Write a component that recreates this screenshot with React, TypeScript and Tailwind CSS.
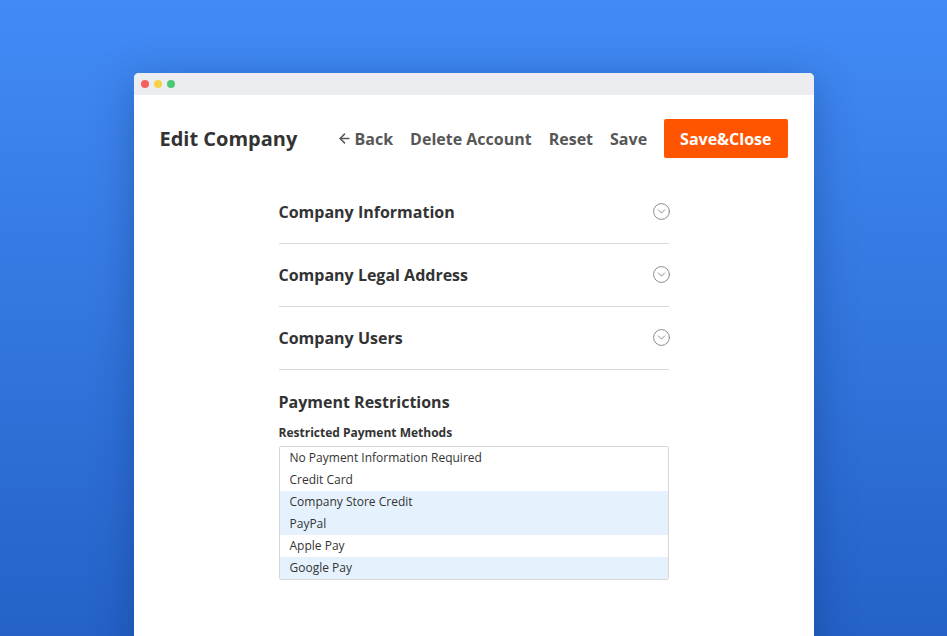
import { ArrowLeft, CircleChevronDown } from "lucide-react";

const sections = ["Company Information", "Company Legal Address", "Company Users"];

const methods = [
  { label: "No Payment Information Required", selected: false },
  { label: "Credit Card", selected: false },
  { label: "Company Store Credit", selected: true },
  { label: "PayPal", selected: true },
  { label: "Apple Pay", selected: false },
  { label: "Google Pay", selected: true },
];

export default function App() {
  return (
    <div
      className="h-[636px] w-full overflow-hidden bg-gradient-to-b from-[#428bf6] to-[#2462c7] pt-[73px] text-[#333]"
      style={{ fontFamily: '"Open Sans", sans-serif' }}
    >
      <div className="mx-auto h-[600px] w-[680px] overflow-hidden rounded-t-[5px] bg-white shadow-[0_8px_40px_rgba(10,40,100,0.35)]">
        {/* title bar */}
        <div className="flex h-[22px] items-center gap-[5px] bg-[#ebedf0] pl-[7px]">
          <span className="h-2 w-2 rounded-full bg-[#f56060]" />
          <span className="h-2 w-2 rounded-full bg-[#f9d04a]" />
          <span className="h-2 w-2 rounded-full bg-[#4cc774]" />
        </div>

        {/* page header */}
        <div className="flex items-center justify-between pl-[26px] pr-[26px] pt-[24px]">
          <h1 className="text-[20px] font-bold text-[#333]">Edit Company</h1>
          <div className="flex items-center gap-[17px] text-[16px] font-bold text-[#575757]">
            <span className="flex items-center gap-[3px]">
              <ArrowLeft className="h-[15px] w-[15px]" strokeWidth={2.4} />
              Back
            </span>
            <span>Delete Account</span>
            <span>Reset</span>
            <span>Save</span>
            <button className="h-[39px] rounded-[2px] bg-[#ff5501] px-4 text-[16px] font-bold text-white">
              Save&amp;Close
            </button>
          </div>
        </div>

        {/* content */}
        <div className="mx-auto mt-[23px] w-[390px]">
          {sections.map((s) => (
            <div key={s} className="flex h-[63px] items-center justify-between border-b border-[#d9d9d9] pb-px">
              <span className="text-[16px] font-bold text-[#333]">{s}</span>
              <CircleChevronDown className="-mr-[2px] h-[19px] w-[19px] text-[#7a7a7a]" strokeWidth={1.1} />
            </div>
          ))}

          <div className="flex h-[63px] items-center">
            <span className="text-[16px] font-bold text-[#333]">Payment Restrictions</span>
          </div>
          <div className="-mt-[9px] text-[12px] font-bold text-[#333]">Restricted Payment Methods</div>
          <div className="mt-[4px] overflow-hidden rounded-[2px] border border-[#d6d6d6]">
            {methods.map((m) => (
              <div
                key={m.label}
                className={`flex h-[22px] items-center pl-[10px] text-[12px] text-[#333] ${m.selected ? "bg-[#e5f2fd]" : "bg-white"}`}
              >
                {m.label}
              </div>
            ))}
          </div>
        </div>
      </div>
    </div>
  );
}
